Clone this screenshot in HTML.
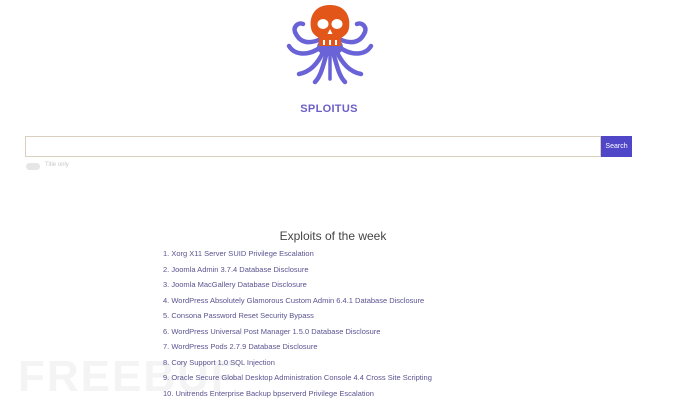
<!DOCTYPE html>
<html><head><meta charset="utf-8"><style>
body{margin:0;width:690px;height:404px;background:#fff;font-family:"Liberation Sans",sans-serif;position:relative;overflow:hidden}
.abs{position:absolute}
.title{left:0;width:658px;top:103px;text-align:center;color:#6a60c8;font-weight:bold;font-size:11px;letter-spacing:.3px}
.inp{left:25px;top:136px;width:576px;height:21px;border:1px solid #d8cfc0;box-sizing:border-box}
.btn{left:601px;top:136px;width:31px;height:21px;background:#5046c8;color:#fff;font-size:7px;text-align:center;line-height:21px}
.tog{left:26px;top:163px;width:14px;height:7px;border-radius:4px;background:#e6e6e6}
.tl{left:45px;top:162px;font-size:6px;color:#c8c8c8}
h2{position:absolute;left:0;width:666px;top:229px;margin:0;text-align:center;font-weight:normal;font-size:12px;color:#444}
ol{position:absolute;left:163px;top:248px;margin:0;padding:0;list-style:none;font-size:7.5px;color:#5a5390}
ol li{height:15.5px;line-height:11px}
.wm{left:18px;top:352px;font-size:44px;font-weight:bold;color:#f3f4f3;letter-spacing:2px}
</style></head><body>
<div class="abs wm">FREEBUF</div>
<svg class="abs" style="left:285px;top:4px" width="90" height="82" viewBox="0 0 90 82">
<g fill="none" stroke="#6a63d8" stroke-linecap="round">
<path d="M36 35 C25 40 15 40 10 28 C8 22 14 18 18 20" stroke-width="4.5"/>
<path d="M54 35 C65 40 75 40 80 28 C82 22 76 18 72 20" stroke-width="4.5"/>
<path d="M37 42 C25 52 10 52 4 42" stroke-width="4.5"/>
<path d="M53 42 C65 52 80 52 86 42" stroke-width="4.5"/>
<path d="M39 46 C33 60 25 68 14 70" stroke-width="4.5"/>
<path d="M51 46 C57 60 65 68 76 70" stroke-width="4.5"/>
<path d="M42 48 C38 62 36 72 30 78" stroke-width="4.5"/>
<path d="M48 48 C52 62 54 72 60 78" stroke-width="4.5"/>
<path d="M45 48 L45 75" stroke-width="3.5"/>
</g>
<ellipse cx="45" cy="43" rx="13" ry="9" fill="#6a63d8"/>
<path d="M45 1 C30 1 24 12 26 24 C27 30 31 32 34 34 L34 42 L56 42 L56 34 C59 32 63 30 64 24 C66 12 60 1 45 1Z" fill="#e2561a"/>
<ellipse cx="38" cy="20" rx="5.5" ry="5" fill="#fff"/>
<ellipse cx="52" cy="20" rx="5.5" ry="5" fill="#fff"/>
<path d="M45 25 L42.5 30 L47.5 30Z" fill="#fff"/>
<rect x="38" y="36" width="2" height="5" fill="#fff"/><rect x="44" y="36" width="2" height="5" fill="#fff"/><rect x="50" y="36" width="2" height="5" fill="#fff"/>
</svg>
<div class="abs title">SPLOITUS</div>
<div class="abs inp"></div>
<div class="abs btn">Search</div>
<div class="abs tog"></div>
<div class="abs tl">Title only</div>
<h2>Exploits of the week</h2>
<ol>
<li>1. Xorg X11 Server SUID Privilege Escalation</li>
<li>2. Joomla Admin 3.7.4 Database Disclosure</li>
<li>3. Joomla MacGallery Database Disclosure</li>
<li>4. WordPress Absolutely Glamorous Custom Admin 6.4.1 Database Disclosure</li>
<li>5. Consona Password Reset Security Bypass</li>
<li>6. WordPress Universal Post Manager 1.5.0 Database Disclosure</li>
<li>7. WordPress Pods 2.7.9 Database Disclosure</li>
<li>8. Cory Support 1.0 SQL Injection</li>
<li>9. Oracle Secure Global Desktop Administration Console 4.4 Cross Site Scripting</li>
<li>10. Unitrends Enterprise Backup bpserverd Privilege Escalation</li>
</ol>
</body></html>
